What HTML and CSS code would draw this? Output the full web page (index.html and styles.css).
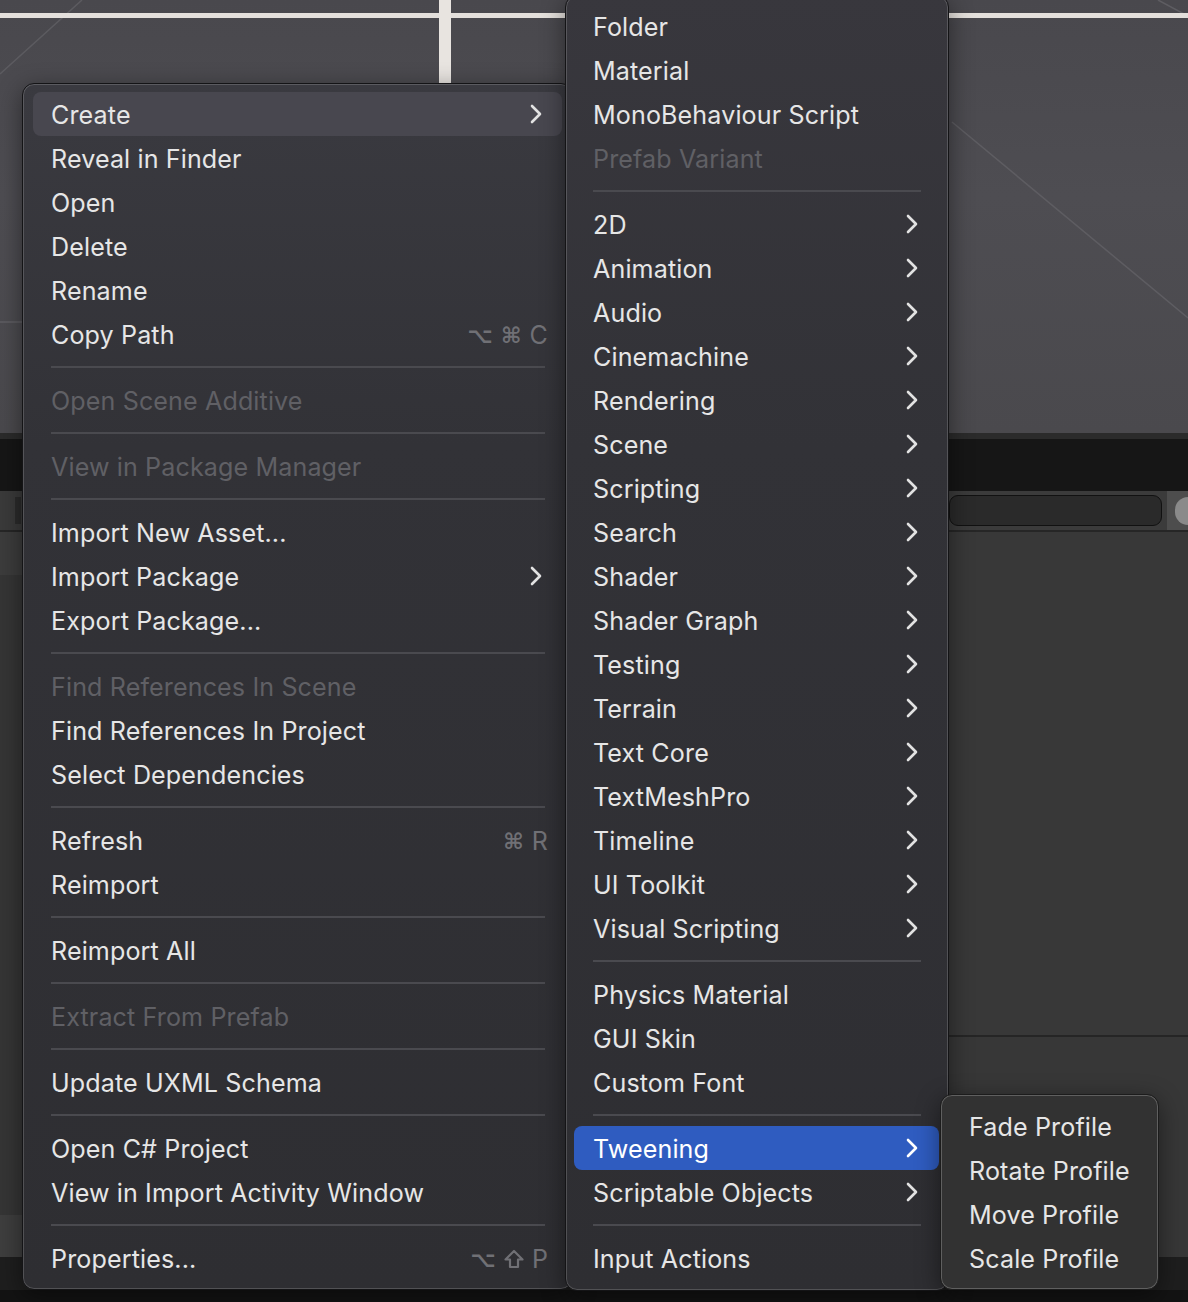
FILE: index.html
```html
<!DOCTYPE html>
<html lang="en">
<head>
<meta charset="utf-8">
<title>Unity Project Context Menu</title>
<link rel="stylesheet" href="styles.css">
</head>
<body>
<div class="app">
  <div class="scene">
    <svg class="scene-grid" viewBox="0 0 1188 433" preserveAspectRatio="none" width="1188" height="433">
      <line x1="0" y1="74" x2="82" y2="0" stroke="#5c5b60" stroke-width="1.5"/>
      <line x1="952" y1="122" x2="1188" y2="318" stroke="#5e5d62" stroke-width="1.5"/>
      <line x1="1158" y1="0" x2="1188" y2="16" stroke="#5e5d62" stroke-width="1.5"/>
      <line x1="0" y1="322" x2="22" y2="322" stroke="#5a595e" stroke-width="2"/>
      <rect x="0" y="13" width="1188" height="5" fill="#e4e0dc"/>
      <rect x="439" y="0" width="12" height="90" fill="#e8e4e0"/>
    </svg>
  </div>
  <div class="scene-edge"></div>
  <div class="toolbar"></div>
  <div class="searchbar">
    <div class="search-left"></div>
    <div class="search-spacer"></div>
    <div class="search-field"></div>
    <div class="search-btn"><span class="dot"></span></div>
  </div>
  <div class="lower">
    <div class="lower-main">
      <div class="left-pane">
        <div class="left-row sel"></div>
        <div class="left-fill"></div>
        <div class="left-row foot"></div>
      </div>
      <div class="right-pane">
        <div class="right-top"></div>
        <div class="right-bottom"></div>
      </div>
    </div>
    <div class="statusbar"></div>
    <div class="bottom-edge"></div>
  </div>
</div>

<div class="menu menu-main">
  <div class="item active"><span>Create</span><svg class="chev" viewBox="0 0 12 20"><polyline points="2,2 10,10 2,18"/></svg></div>
  <div class="item"><span>Reveal in Finder</span></div>
  <div class="item"><span>Open</span></div>
  <div class="item"><span>Delete</span></div>
  <div class="item"><span>Rename</span></div>
  <div class="item"><span>Copy Path</span><span class="keys"><span>⌥</span><span>⌘</span><span>C</span></span></div>
  <div class="sep"></div>
  <div class="item disabled"><span>Open Scene Additive</span></div>
  <div class="sep"></div>
  <div class="item disabled"><span>View in Package Manager</span></div>
  <div class="sep"></div>
  <div class="item"><span>Import New Asset...</span></div>
  <div class="item"><span>Import Package</span><svg class="chev" viewBox="0 0 12 20"><polyline points="2,2 10,10 2,18"/></svg></div>
  <div class="item"><span>Export Package...</span></div>
  <div class="sep"></div>
  <div class="item disabled"><span>Find References In Scene</span></div>
  <div class="item"><span>Find References In Project</span></div>
  <div class="item"><span>Select Dependencies</span></div>
  <div class="sep"></div>
  <div class="item"><span>Refresh</span><span class="keys"><span>⌘</span><span>R</span></span></div>
  <div class="item"><span>Reimport</span></div>
  <div class="sep"></div>
  <div class="item"><span>Reimport All</span></div>
  <div class="sep"></div>
  <div class="item disabled"><span>Extract From Prefab</span></div>
  <div class="sep"></div>
  <div class="item"><span>Update UXML Schema</span></div>
  <div class="sep"></div>
  <div class="item"><span>Open C# Project</span></div>
  <div class="item"><span>View in Import Activity Window</span></div>
  <div class="sep"></div>
  <div class="item"><span>Properties...</span><span class="keys"><span>⌥</span><svg class="shift" viewBox="0 0 20 20"><polygon points="10,2 18.5,10.5 14,10.5 14,18 6,18 6,10.5 1.5,10.5"/></svg><span>P</span></span></div>
</div>

<div class="menu menu-create">
  <div class="item"><span>Folder</span></div>
  <div class="item"><span>Material</span></div>
  <div class="item"><span>MonoBehaviour Script</span></div>
  <div class="item disabled"><span>Prefab Variant</span></div>
  <div class="sep"></div>
  <div class="item"><span>2D</span><svg class="chev" viewBox="0 0 12 20"><polyline points="2,2 10,10 2,18"/></svg></div>
  <div class="item"><span>Animation</span><svg class="chev" viewBox="0 0 12 20"><polyline points="2,2 10,10 2,18"/></svg></div>
  <div class="item"><span>Audio</span><svg class="chev" viewBox="0 0 12 20"><polyline points="2,2 10,10 2,18"/></svg></div>
  <div class="item"><span>Cinemachine</span><svg class="chev" viewBox="0 0 12 20"><polyline points="2,2 10,10 2,18"/></svg></div>
  <div class="item"><span>Rendering</span><svg class="chev" viewBox="0 0 12 20"><polyline points="2,2 10,10 2,18"/></svg></div>
  <div class="item"><span>Scene</span><svg class="chev" viewBox="0 0 12 20"><polyline points="2,2 10,10 2,18"/></svg></div>
  <div class="item"><span>Scripting</span><svg class="chev" viewBox="0 0 12 20"><polyline points="2,2 10,10 2,18"/></svg></div>
  <div class="item"><span>Search</span><svg class="chev" viewBox="0 0 12 20"><polyline points="2,2 10,10 2,18"/></svg></div>
  <div class="item"><span>Shader</span><svg class="chev" viewBox="0 0 12 20"><polyline points="2,2 10,10 2,18"/></svg></div>
  <div class="item"><span>Shader Graph</span><svg class="chev" viewBox="0 0 12 20"><polyline points="2,2 10,10 2,18"/></svg></div>
  <div class="item"><span>Testing</span><svg class="chev" viewBox="0 0 12 20"><polyline points="2,2 10,10 2,18"/></svg></div>
  <div class="item"><span>Terrain</span><svg class="chev" viewBox="0 0 12 20"><polyline points="2,2 10,10 2,18"/></svg></div>
  <div class="item"><span>Text Core</span><svg class="chev" viewBox="0 0 12 20"><polyline points="2,2 10,10 2,18"/></svg></div>
  <div class="item"><span>TextMeshPro</span><svg class="chev" viewBox="0 0 12 20"><polyline points="2,2 10,10 2,18"/></svg></div>
  <div class="item"><span>Timeline</span><svg class="chev" viewBox="0 0 12 20"><polyline points="2,2 10,10 2,18"/></svg></div>
  <div class="item"><span>UI Toolkit</span><svg class="chev" viewBox="0 0 12 20"><polyline points="2,2 10,10 2,18"/></svg></div>
  <div class="item"><span>Visual Scripting</span><svg class="chev" viewBox="0 0 12 20"><polyline points="2,2 10,10 2,18"/></svg></div>
  <div class="sep"></div>
  <div class="item"><span>Physics Material</span></div>
  <div class="item"><span>GUI Skin</span></div>
  <div class="item"><span>Custom Font</span></div>
  <div class="sep"></div>
  <div class="item selected"><span>Tweening</span><svg class="chev" viewBox="0 0 12 20"><polyline points="2,2 10,10 2,18"/></svg></div>
  <div class="item"><span>Scriptable Objects</span><svg class="chev" viewBox="0 0 12 20"><polyline points="2,2 10,10 2,18"/></svg></div>
  <div class="sep"></div>
  <div class="item"><span>Input Actions</span></div>
</div>

<div class="menu menu-tween">
  <div class="item"><span>Fade Profile</span></div>
  <div class="item"><span>Rotate Profile</span></div>
  <div class="item"><span>Move Profile</span></div>
  <div class="item"><span>Scale Profile</span></div>
</div>
</body>
</html>
```

FILE: styles.css
```css
* { box-sizing: border-box; }

html, body {
  margin: 0;
  padding: 0;
  width: 1188px;
  height: 1302px;
  overflow: hidden;
  background: #151515;
  font-family: Inter, "Noto Sans", "DejaVu Sans", sans-serif;
}

.app {
  display: flex;
  flex-direction: column;
  width: 1188px;
  height: 1302px;
}

.scene {
  height: 433px;
  background: linear-gradient(180deg, #49484d 0%, #4e4d52 45%, #4a494d 100%);
}
.scene-grid { display: block; }

.scene-edge { height: 6px; background: #2b2b2b; }
.toolbar { height: 52px; background: #161616; }

.searchbar {
  height: 41px;
  display: flex;
  align-items: stretch;
  background: #3b3b3b;
  border-bottom: 2px solid #262626;
}
.search-left {
  width: 22px;
  background: #3a3a3a;
  border-top: 6px solid #3a3a3a;
}
.search-left::after {
  content: "";
  display: block;
  width: 6px;
  margin-left: 15px;
  height: 27px;
  background: #2b2b2b;
}
.search-spacer { flex: 1; }
.search-field {
  width: 213px;
  margin: 4px 5px 4px 0;
  background: #2a2a2a;
  border: 1px solid #111111;
  border-radius: 9px;
}
.search-btn {
  width: 21px;
  background: #4d4d4d;
  display: flex;
  align-items: center;
}
.dot {
  display: block;
  width: 16px;
  height: 28px;
  margin-left: 8px;
  border-radius: 14px 0 0 14px;
  background: #8a8a8a;
}

.lower {
  flex: 1;
  display: flex;
  flex-direction: column;
}
.lower-main {
  flex: 1;
  display: flex;
}
.left-pane {
  width: 560px;
  display: flex;
  flex-direction: column;
  background: #363636;
}
.left-row.sel { height: 43px; background: #3c3c3c; }
.left-fill { flex: 1; background: #353535; }
.left-row.foot { height: 42px; background: #3e3e3e; }

.right-pane {
  flex: 1;
  display: flex;
  flex-direction: column;
}
.right-top {
  height: 505px;
  background: #383838;
  border-bottom: 2px solid #252525;
}
.right-bottom { flex: 1; background: #373737; }

.statusbar { height: 33px; background: #1e1e1e; }
.bottom-edge { height: 12px; background: #131313; }

/* ---------- menus ---------- */
.menu {
  position: absolute;
  display: flex;
  flex-direction: column;
  border: 1px solid #141416;
  border-radius: 12px;
  box-shadow: inset 0 0 0 1px rgba(255, 255, 255, 0.17), 0 6px 24px rgba(0, 0, 0, 0.45);
  font-size: 25.1px;
  color: #e6e6e6;
}

.menu-main {
  left: 22px;
  top: 83px;
  width: 551px;
  padding: 8px 10px 9px 10px;
  background: linear-gradient(180deg, #3a3a40 0%, #323237 30%, #2e2e32 100%);
}
.menu-create {
  left: 565px;
  top: -5px;
  width: 384px;
  padding: 8px 9px 10px 8px;
  background: linear-gradient(180deg, #38373d 0%, #323237 35%, #2e2e32 100%);
}
.menu-tween {
  left: 940px;
  top: 1094px;
  width: 219px;
  padding: 9px 10px 9px 10px;
  background: #323232;
  border-color: #1c1c1c;
  box-shadow: inset 0 0 0 1px rgba(255, 255, 255, 0.22), 0 6px 24px rgba(0, 0, 0, 0.45);
}

.item {
  display: flex;
  align-items: center;
  justify-content: space-between;
  height: 44px;
  padding: 2px 20px 0 18px;
  border-radius: 8px;
  white-space: nowrap;
  letter-spacing: 0.12px;
}
.menu-create .item { padding-left: 19px; padding-right: 21px; }
.menu-tween .item { padding-left: 18px; }

.item.active { background: #48474f; }
.item.selected { background: #2f5cc0; color: #ffffff; }
.item.disabled { color: #606065; }

.chev {
  width: 12px;
  height: 20px;
  flex: none;
  margin-top: -2px;
  fill: none;
  stroke: #e2e2e2;
  stroke-width: 2.6;
  stroke-linecap: round;
  stroke-linejoin: round;
}
.item.selected .chev { stroke: #ffffff; }

.keys {
  display: flex;
  align-items: center;
  gap: 8px;
  margin-right: -6px;
  color: #707075;
  font-family: "DejaVu Sans", Inter, sans-serif;
  font-size: 22px;
  font-weight: bold;
}
.keys span:last-child {
  font-family: Inter, sans-serif;
  font-weight: 400;
  font-size: 25px;
}
.shift {
  width: 20px;
  height: 20px;
  fill: none;
  stroke: #707075;
  stroke-width: 2.2;
  stroke-linejoin: round;
}

.sep {
  height: 2px;
  margin: 10px 17px 10px 18px;
  background: #4a4a4f;
  flex: none;
}
.menu-create .sep { margin-left: 19px; margin-right: 18px; }
```
